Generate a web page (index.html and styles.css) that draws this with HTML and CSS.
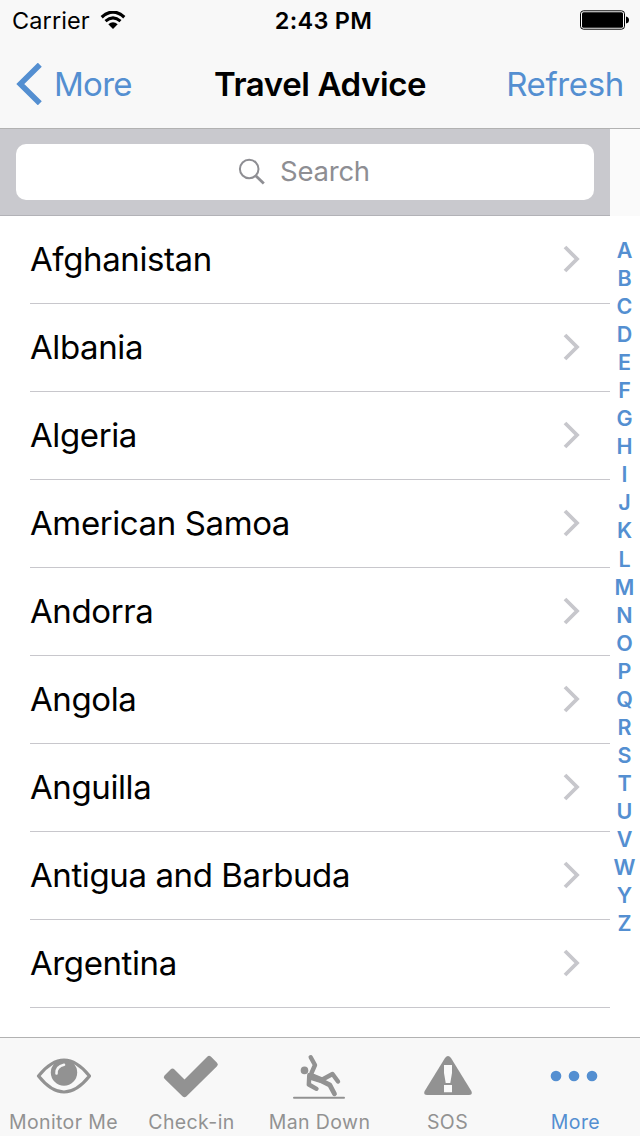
FILE: index.html
```html
<!DOCTYPE html>
<html lang="en">
<head>
<meta charset="utf-8">
<title>Travel Advice</title>
<link rel="stylesheet" href="styles.css">
</head>
<body>
<div class="app">
  <header class="top">
    <div class="status">
      <div class="carrier"><span>Carrier</span>
        <svg width="26" height="19" viewBox="0 0 26 19"><path d="M1.700 6.200Q13-4 24.300 6.200" fill="none" stroke="#000" stroke-width="3.200"/><path d="M5.500 10.200Q13 3.600 20.500 10.200" fill="none" stroke="#000" stroke-width="3"/><path d="M8.300 13.300Q13 9.200 17.700 13.300L13 18Z"/></svg>
      </div>
      <div class="time">2:43 PM</div>
      <svg class="battery" width="50" height="20" viewBox="0 0 50 20"><rect x=".5" y=".8" width="44" height="18.400" rx="3" fill="#fff" stroke="#000"/><rect x="2" y="2.300" width="41" height="15.400" rx="1.500"/><path d="M46 6.500q3 .5 3 3.500t-3 3.500Z"/></svg>
    </div>
    <nav class="navbar">
      <a class="back"><svg width="26" height="42" viewBox="0 0 26 42"><path d="M23.800 1.700L4.300 21L23.800 40.300" fill="none" stroke="currentColor" stroke-width="5.600"/></svg><span>More</span></a>
      <h1 class="title">Travel Advice</h1>
      <a class="refresh">Refresh</a>
    </nav>
  </header>
  <main class="content">
    <div class="list">
      <div class="searchbar"><div class="field">
        <svg width="28" height="28" viewBox="0 0 28 28" fill="none" stroke="#8e8e93"><circle cx="11.200" cy="11" r="9.300" stroke-width="2"/><path d="M18 18L25.800 25.600" stroke-width="2.800"/></svg>
        <span>Search</span></div></div>
      <ul class="rows" id="rows"></ul>
    </div>
    <div class="side"><div class="side-head"></div><div class="index" id="index"></div></div>
  </main>
  <footer class="tabs">
    <div class="tab"><svg width="56" height="44" viewBox="-1 0 56 44"><path d="M2.500 22Q28-10 53.500 22Q28 54 2.500 22Z" fill="none" stroke="currentColor" stroke-width="3.200" stroke-linejoin="round"/><circle cx="28" cy="18.500" r="13.200" fill="currentColor"/><path d="M20.500 19.500Q20 12.500 28 10.700" fill="none" stroke="#f6f6f6" stroke-width="2.600" stroke-linecap="round"/></svg><span>Monitor Me</span></div>
    <div class="tab"><svg width="56" height="44" viewBox="0 0 56 44"><path d="M1.500 21.500L7.500 15.500Q9.500 13.500 11.500 15.500L21.500 25.500L44.500 2.500Q46 1 47.800 2.500L54 8.700Q55.800 10.500 54 12.300L23.300 42.500Q21.500 44 19.700 42.500L1.500 24.800Q0 23.200 1.500 21.500Z" fill="currentColor"/></svg><span>Check-in</span></div>
    <div class="tab"><svg width="56" height="48" viewBox="0 0 56 48" fill="none" stroke="currentColor" stroke-linecap="round" stroke-linejoin="round"><circle cx="13.500" cy="18.400" r="3.800" fill="currentColor" stroke="none"/><path d="M19.700 5.200L24 13L20.500 21" stroke-width="4.400"/><path d="M18.300 23L17.800 32.500L25.500 36.800" stroke-width="4.400"/><path d="M21 24L38.800 33L43.500 41.800" stroke-width="4.800"/><path d="M30 28.300L41.500 22L47 29.500" stroke-width="4.400"/><path d="M20 21.500L31 26L34 31L27 29.500L19 27Z" fill="currentColor" stroke-width="1.500"/><path d="M3 45.800H53" stroke-width="2"/></svg><span>Man Down</span></div>
    <div class="tab"><svg width="50" height="44" viewBox="-1 0 50 44"><path d="M22 4Q25 0 28 4L48.300 37Q50 41 46 41H4Q0 41 1.700 37Z" fill="currentColor"/><path d="M21 11H29V19L27.300 29H22.700L21 19ZM21 31H29V38.300H21Z" fill="#fafafa"/></svg><span>SOS</span></div>
    <div class="tab active"><svg width="56" height="44" viewBox="0 0 56 44" fill="currentColor"><circle cx="9" cy="22" r="5.300"/><circle cx="27" cy="22" r="5.300"/><circle cx="45" cy="22" r="5.300"/></svg><span>More</span></div>
  </footer>
</div>
<script src="app.js"></script>
</body>
</html>
```
FILE: styles.css
```css
*{box-sizing:border-box}
body{margin:0;font-family:Inter,"Liberation Sans",sans-serif;color:#000;background:#fff}
svg{display:block;flex:none}
.app{width:640px;height:1136px;display:flex;flex-direction:column;overflow:hidden}
.top{height:129px;flex:none;background:#f8f8f8;border-bottom:1px solid #b2b2b2}
.status{height:40px;display:grid;grid-template-columns:1fr auto 1fr;align-items:center;padding:0 10px 0 12px}
.carrier{display:flex;align-items:center;gap:10px;font-size:23.500px;letter-spacing:.1px}
.time{font-size:23.500px;font-weight:600;letter-spacing:.3px;padding-left:5px}
.battery{justify-self:end}
.navbar{height:88px;display:grid;grid-template-columns:1fr auto 1fr;align-items:center;padding:0 16px;font-size:33px}
.back,.refresh{color:#548fd1}
.back{display:flex;align-items:center;gap:12px;letter-spacing:-.7px}
.title{margin:0;font-size:33px;font-weight:600;letter-spacing:-.4px}
.refresh{justify-self:end;letter-spacing:-.35px}
.content{flex:1;min-height:0;display:flex;overflow:hidden}
.list{width:610px}
.searchbar{height:87px;padding:15px 16px;background:#c9c9ce;border-bottom:1px solid #b2b2b7}
.field{height:56px;border-radius:10px;background:#fff;display:flex;align-items:center;justify-content:center;gap:14px;padding-right:2px;color:#8e8e93;font-size:27.500px;letter-spacing:-.25px}
.field span{line-height:34px;padding-bottom:2px}
.rows{list-style:none;margin:0;padding:0 0 0 30px}
.row{height:88px;display:flex;align-items:center;justify-content:space-between;padding:0 29px 2px 0;border-bottom:1px solid #c8c7cc;font-size:33px;letter-spacing:-.4px}
.side{width:30px}
.side-head{height:87px;background:#fafafa}
.index{padding:20px 1px 0 0;color:#548fd1;font-size:21.500px;font-weight:600;text-align:center}
.letter{height:28.050px;line-height:28px}
.tabs{height:99px;flex:none;display:grid;grid-template-columns:repeat(5,128px);background:#f8f8f8;border-top:1px solid #b2b2b2;color:#929292}
.tab{display:flex;flex-direction:column;align-items:center;padding:14px 2px 0 0;font-size:19.500px;letter-spacing:.4px}
.tab svg{height:48px}
.tab span{line-height:24px;margin-top:10px;padding-left:1px}
.active{color:#548fd1}
```
FILE: app.js
```js
const countries = ["Afghanistan", "Albania", "Algeria", "American Samoa", "Andorra", "Angola", "Anguilla", "Antigua and Barbuda", "Argentina"];
const chevron = '<svg width="18" height="28" viewBox="0 0 18 28"><path d="M2 2L14 14L2 26" fill="none" stroke="#c7c7cc" stroke-width="3.800"/></svg>';
document.getElementById("rows").innerHTML = countries.map(c => `<li class="row"><span>${c}</span>${chevron}</li>`).join("");
document.getElementById("index").innerHTML = [..."ABCDEFGHIJKLMNOPQRSTUVWYZ"].map(l => `<div class="letter">${l}</div>`).join("");
```
